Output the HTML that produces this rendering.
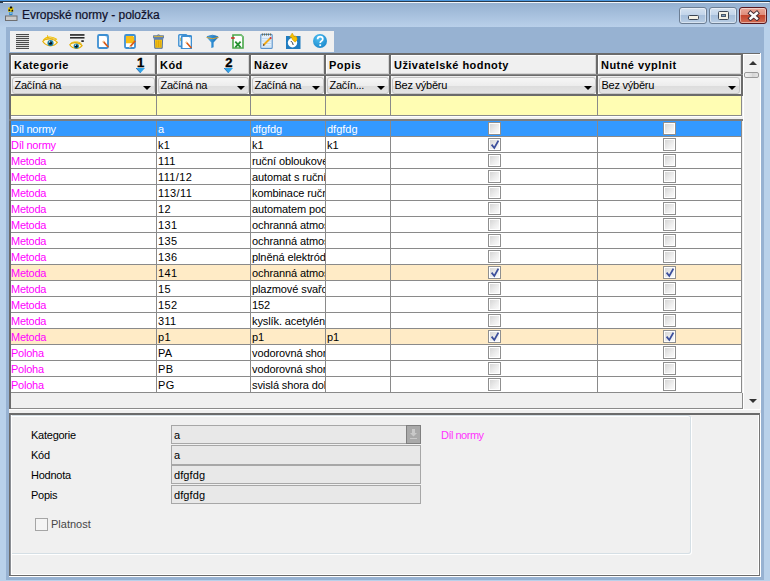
<!DOCTYPE html>
<html><head><meta charset="utf-8"><title>Evropské normy - položka</title>
<style>
*{margin:0;padding:0;box-sizing:border-box}
html,body{width:770px;height:581px;overflow:hidden;background:#b9d1ea;font-family:"Liberation Sans",sans-serif;font-size:11px;color:#000}
.a{position:absolute}
.t{position:absolute;white-space:nowrap;line-height:13px;letter-spacing:-0.25px}
.cb{position:absolute;width:13px;height:13px;border:1px solid #8f8f8f;background:#fff}
.cb i{position:absolute;left:1px;top:1px;width:9px;height:9px;background:linear-gradient(135deg,#d6d6d6 0%,#eeeeee 60%,#fafafa 100%)}
.cb svg{position:absolute;left:1px;top:0px}
.row{position:absolute;left:11px;width:731px;height:15px;background:#fff}
.cell{position:absolute;top:0;height:15px;overflow:hidden;white-space:nowrap;line-height:15px;padding-top:1px;letter-spacing:-0.25px}
.combo{position:absolute;height:17px;border:1px solid #c6c6c6;border-radius:3px;background:linear-gradient(#f6f6f6 0%,#ededed 50%,#dcdcdc 51%,#e4e4e4 100%)}
.combo span{position:absolute;left:1.5px;top:0px;line-height:14px;white-space:nowrap;letter-spacing:-0.25px}
.combo b{position:absolute;right:3px;top:8px;width:0;height:0;border-left:4px solid transparent;border-right:4px solid transparent;border-top:4px solid #000}
.hdr{position:absolute;top:55px;height:19px;background:#f0f0f0;border-top:1px solid #fff;border-left:1px solid #fff;border-right:1px solid #d4d4d4;border-bottom:1px solid #d4d4d4}
.hdr span{position:absolute;left:2px;top:3px;font-weight:bold;line-height:13px;white-space:nowrap;letter-spacing:0.45px}
.lbl{position:absolute;left:31px;line-height:13px;letter-spacing:-0.25px}
.fld{position:absolute;left:171px;width:250px;height:19px;border:1px solid #a7a7a7;background:#e8e8e8}
.fld span{position:absolute;left:2px;top:3px;line-height:13px;letter-spacing:0.1px}
</style></head><body>

<div class="a" style="left:0;top:0;width:770px;height:1px;background:#4a97df"></div>
<div class="a" style="left:0;top:1px;width:770px;height:1px;background:#2a3a4c"></div>
<div class="a" style="left:1px;top:2px;width:768px;height:1px;background:#f2f6fb"></div>
<div class="a" style="left:0;top:2px;width:3px;height:2px;background:#2a3a4c"></div>
<div class="a" style="left:0;top:3px;width:770px;height:24px;background:linear-gradient(#95b1d1,#b9d0ea)"></div>
<svg class="a" style="left:5px;top:6px" width="13" height="16" viewBox="0 0 13 16">
<rect x="0.5" y="10" width="11.5" height="4.5" fill="#cacaca" stroke="#6e6e70" stroke-width="1"/>
<path d="M3 10.5 L5 9 L7.5 9 L9.5 10.5 Z" fill="#9a9a9a"/>
<rect x="4.2" y="5.6" width="3.2" height="3.6" fill="#2a86c6"/>
<rect x="4.8" y="6.6" width="2" height="1" fill="#bfe0f5"/>
<path d="M3 1.5 L8.5 1.5 L8.2 5.8 L3.3 5.8 Z" fill="#f2d000"/>
<path d="M5 0.6 L7 0.6 L7.4 2.4 L4.6 2.4 Z M3.4 3.6 L5 3.2 L5.4 4.8 L3.6 5.2 Z M6.6 4 L8 3.6 L8.2 5.4 L6.4 5.6 Z" fill="#111"/>
</svg>
<div class="t" style="left:22px;top:8px;font-size:12px;line-height:15px;letter-spacing:-0.05px;color:#10102a;-webkit-text-stroke:0.2px #10102a">Evropské normy - položka</div>
<div class="a" style="left:679px;top:7px;width:28px;height:17px;border:1px solid #6c7e94;border-radius:3px;background:linear-gradient(#d5e2f0 0%,#c3d5ea 45%,#a7bfdb 50%,#b8cde4 100%);box-shadow:inset 0 0 0 1px rgba(255,255,255,0.45)"></div>
<div class="a" style="left:709px;top:7px;width:28px;height:17px;border:1px solid #6c7e94;border-radius:3px;background:linear-gradient(#d5e2f0 0%,#c3d5ea 45%,#a7bfdb 50%,#b8cde4 100%);box-shadow:inset 0 0 0 1px rgba(255,255,255,0.45)"></div>
<div class="a" style="left:739px;top:7px;width:28px;height:17px;border:1px solid #561820;border-radius:3px;background:linear-gradient(#eaa898 0%,#df8e7c 45%,#c4452c 50%,#d06a52 100%);box-shadow:inset 0 0 0 1px rgba(255,255,255,0.45)"></div>
<div class="a" style="left:688px;top:15px;width:11px;height:5px;background:#f4f1e6;border:1px solid #3c4654;border-radius:1.5px"></div>
<div class="a" style="left:718px;top:11px;width:11px;height:9px;background:#f4f1e6;border:1px solid #3c4654;border-radius:1.5px"><div class="a" style="left:2px;top:2px;width:5px;height:3px;background:#7f9bbb;border:1px solid #4a5868"></div></div>
<svg class="a" style="left:747px;top:10px" width="13" height="11" viewBox="0 0 13 11"><path d="M3.6 3.2 L9.8 8.4 M9.8 3.2 L3.6 8.4" stroke="#3a2630" stroke-width="4.4" stroke-linecap="square"/><path d="M3.6 3.2 L9.8 8.4 M9.8 3.2 L3.6 8.4" stroke="#fbfbfb" stroke-width="2.6" stroke-linecap="square"/></svg>
<div class="a" style="left:6px;top:27px;width:758px;height:553px;background:#97b2d2"></div>
<div class="a" style="left:10px;top:31px;width:324px;height:21px;background:#f0f0f0"></div>
<svg class="a" style="left:16px;top:34px" width="14" height="15" viewBox="0 0 14 15"><g fill="#4a4a4a" transform="scale(0.93,1)"><rect x="0" y="0" width="14" height="1.1"/><rect x="0" y="2" width="14" height="1.1"/><rect x="0" y="4" width="14" height="1.1"/><rect x="0" y="6" width="14" height="1.1"/><rect x="0" y="8" width="14" height="1.1"/><rect x="0" y="10" width="14" height="1.1"/><rect x="0" y="12" width="14" height="1.1"/><rect x="0" y="14" width="14" height="1.1"/></g></svg>
<svg class="a" style="left:42px;top:35px" width="16" height="13" viewBox="0 0 16 13"><path d="M1 5.5 C4 1.5 10 0.8 15 4.5" fill="none" stroke="#f2c000" stroke-width="1.1"/><path d="M2.5 6 C5 3 10 2.5 14 5" fill="none" stroke="#e8b400" stroke-width="0.9"/><path d="M5.5 0.2 L5.8 2.6" stroke="#e8b400" stroke-width="0.9"/><path d="M0.8 6.5 C3 3.5 11 2.5 15.3 7.5 C12 11.8 5 12.3 0.8 6.5 Z" fill="#fdf8e0" stroke="#e3ac00" stroke-width="1.2"/><circle cx="8.5" cy="8" r="3.1" fill="#1f84ad"/><circle cx="8.5" cy="8.2" r="1.6" fill="#05121c"/><circle cx="7.6" cy="6.9" r="0.7" fill="#fff"/></svg>
<svg class="a" style="left:69px;top:34px" width="16" height="15" viewBox="0 0 16 15"><rect x="1" y="0.2" width="14.5" height="1.5" fill="#151515"/><rect x="1" y="3.1" width="14.5" height="1.4" fill="#151515"/><rect x="12.3" y="6.3" width="2.5" height="1.6" fill="#151515"/><g transform="translate(0,5.2) scale(0.86)"><path d="M1.5 5.5 C4 2.5 10 2 14.5 5" fill="none" stroke="#f2c000" stroke-width="1"/><path d="M0.8 6.5 C3 3.5 11 2.5 15.3 7.5 C12 11.8 5 12.3 0.8 6.5 Z" fill="#fdf8e0" stroke="#e3ac00" stroke-width="1.2"/><circle cx="8.5" cy="8" r="3.1" fill="#1f84ad"/><circle cx="8.5" cy="8.2" r="1.6" fill="#05121c"/><circle cx="7.6" cy="6.9" r="0.7" fill="#fff"/></g></svg>
<svg class="a" style="left:97px;top:34px" width="13" height="15" viewBox="0 0 13 15"><rect x="1" y="1" width="10" height="13" rx="1.2" fill="#fff" stroke="#3d8fd2" stroke-width="1.8"/><path d="M8.2 1.9 L10.1 1.9 L10.1 3.9 Z" fill="#9cc8ee"/><path d="M6.2 7.4 L11.4 13.2" stroke="#d85a18" stroke-width="1.7"/><path d="M5.8 7 L6.9 8.2" stroke="#f4c890" stroke-width="1.5"/></svg>
<svg class="a" style="left:124px;top:34px" width="13" height="15" viewBox="0 0 13 15"><rect x="1" y="1" width="10" height="13" rx="1.2" fill="#fff" stroke="#3d8fd2" stroke-width="1.8"/><path d="M2 2 H9.2 L10.1 3.5 V9.3 H2 Z" fill="#f7bd14"/><path d="M11.3 6.8 L6.2 12.6" stroke="#d85a18" stroke-width="1.7"/><path d="M6.5 12.3 L5.4 13.5" stroke="#f4d090" stroke-width="1.4"/></svg>
<svg class="a" style="left:153px;top:34px" width="11" height="15" viewBox="0 0 11 15"><path d="M3.8 1.6 Q5.5 -0.2 7.2 1.6" fill="#f2c21c" stroke="#5673a0" stroke-width="0.8"/><rect x="0.6" y="1.8" width="9.8" height="1.8" fill="#f2c21c" stroke="#5673a0" stroke-width="0.9"/><rect x="0.6" y="3.6" width="9.8" height="1.6" fill="#6088c0"/><path d="M1.4 5.2 L9.6 5.2 L9.2 14.3 L1.8 14.3 Z" fill="#f2c21c" stroke="#5673a0" stroke-width="1"/><path d="M3.8 6.5 V13 M5.5 6.5 V13 M7.2 6.5 V13" stroke="#d9a000" stroke-width="0.8"/></svg>
<svg class="a" style="left:178px;top:34px" width="14" height="15" viewBox="0 0 14 15"><rect x="0.8" y="0.8" width="8" height="11.5" rx="0.8" fill="#fff" stroke="#3d8fd2" stroke-width="1.4"/><rect x="2.2" y="4" width="1" height="3" fill="#f2c21c"/><g transform="translate(2.6,1)"><rect x="1" y="1" width="10" height="13" rx="1.2" fill="#fff" stroke="#3d8fd2" stroke-width="1.8"/><path d="M8.2 1.9 L10.1 1.9 L10.1 3.9 Z" fill="#9cc8ee"/><path d="M5.6 7.2 L10.8 13" stroke="#d85a18" stroke-width="1.7"/><path d="M5.2 6.8 L6.3 8" stroke="#f4c890" stroke-width="1.5"/></g></svg>
<svg class="a" style="left:206px;top:34px" width="13" height="14" viewBox="0 0 13 14"><defs><linearGradient id="fg" x1="0" x2="1"><stop offset="0" stop-color="#60b4ea"/><stop offset="0.5" stop-color="#2b8ad0"/><stop offset="1" stop-color="#1a6cb0"/></linearGradient></defs><path d="M0.3 3 Q6.5 -0.6 12.7 3 L7.6 8.6 L7.6 13.2 L5.3 14 L5.3 8.6 Z" fill="url(#fg)"/><path d="M0.6 3.4 Q6.5 6 12.4 3.4" fill="none" stroke="#d9a030" stroke-width="1"/><path d="M1 2.6 Q6.5 -0.2 12 2.6" fill="none" stroke="#2a7cc0" stroke-width="0.8"/></svg>
<svg class="a" style="left:231px;top:34px" width="13" height="15" viewBox="0 0 13 15"><path d="M2 1 H10.2 L12 2.8 V14 H2 Z" fill="#fff" stroke="#4aa84a" stroke-width="1.6"/><path d="M10 1.5 L11.5 1.5 L11.5 3 Z" fill="#bfe3bf"/><rect x="0" y="3.3" width="3.8" height="1.4" fill="#d42020"/><path d="M4.3 7.6 L9.6 13.4 M9.6 7.6 L4.3 13.4" stroke="#259030" stroke-width="1.8"/></svg>
<svg class="a" style="left:260px;top:33px" width="13" height="16" viewBox="0 0 13 16"><rect x="0.8" y="1.4" width="11.4" height="14" rx="1" fill="#e4f0fb" stroke="#5a92cc" stroke-width="1.1"/><path d="M2 5.5 H11 M2 8 H11 M2 10.5 H11 M2 13 H11" stroke="#b8d4ee" stroke-width="0.7"/><path d="M2.5 0.5 V2.6 M4.5 0.5 V2.6 M6.5 0.5 V2.6 M8.5 0.5 V2.6 M10.5 0.5 V2.6" stroke="#6a6a4a" stroke-width="0.9"/><path d="M3.8 11.8 L10.2 5.4" stroke="#f0a818" stroke-width="2"/><path d="M10 5.6 L11.2 4.4" stroke="#d03030" stroke-width="2"/><path d="M3.2 12.4 L4.2 11.4" stroke="#503018" stroke-width="1.4"/></svg>
<svg class="a" style="left:286px;top:33px" width="15" height="16" viewBox="0 0 15 16"><rect x="0" y="3" width="14.5" height="13" fill="#1f7cc0"/><circle cx="6.5" cy="9.8" r="4.7" fill="#fff"/><path d="M6.5 9.8 L4.8 8 M6.5 9.8 L7.2 12" stroke="#203040" stroke-width="0.9"/><path d="M6.2 0 L3.6 4.2 L5.4 4.2 Q5.6 7 9.2 9.2 Q12.6 6.6 10.4 3.6 Q9.4 2.6 7.8 3.2 L8.8 4.2 Z" fill="#f7c000" stroke="#c08a00" stroke-width="0.4"/></svg>
<svg class="a" style="left:313px;top:34px" width="15" height="15" viewBox="0 0 15 15"><defs><radialGradient id="hg" cx="0.4" cy="0.3" r="0.85"><stop offset="0" stop-color="#4fc0f2"/><stop offset="1" stop-color="#1580c6"/></radialGradient></defs><circle cx="7" cy="7" r="7" fill="url(#hg)"/><path d="M4.6 5.2 Q4.6 2.6 7.2 2.6 Q9.8 2.6 9.8 5 Q9.8 6.4 8.2 7.2 Q7.2 7.7 7.2 9" fill="none" stroke="#fff" stroke-width="1.7"/><rect x="6.3" y="10.3" width="1.8" height="1.8" fill="#fff"/></svg>

<div class="a" style="left:9px;top:53px;width:752px;height:356px;background:#f0f0f0"></div>
<div class="a" style="left:9px;top:53px;width:734px;height:2px;background:#6b6b6b"></div>
<div class="a" style="left:743px;top:53px;width:17px;height:1px;background:#6b6b6b"></div>
<div class="a" style="left:9px;top:53px;width:2px;height:356px;background:#6b6b6b"></div>
<div class="hdr" style="left:11px;width:144px"><span>Kategorie</span></div>
<div class="hdr" style="left:157px;width:92px"><span>Kód</span></div>
<div class="hdr" style="left:251px;width:73px"><span>Název</span></div>
<div class="hdr" style="left:326px;width:63px"><span>Popis</span></div>
<div class="hdr" style="left:391px;width:205px"><span>Uživatelské hodnoty</span></div>
<div class="hdr" style="left:598px;width:143px"><span>Nutné vyplnit</span></div>
<div class="a" style="left:155px;top:53px;width:2px;height:43px;background:#6b6b6b"></div>
<div class="a" style="left:249px;top:53px;width:2px;height:43px;background:#6b6b6b"></div>
<div class="a" style="left:324px;top:53px;width:2px;height:43px;background:#6b6b6b"></div>
<div class="a" style="left:389px;top:53px;width:2px;height:43px;background:#6b6b6b"></div>
<div class="a" style="left:596px;top:53px;width:2px;height:43px;background:#6b6b6b"></div>
<div class="a" style="left:741px;top:53px;width:2px;height:43px;background:#6b6b6b"></div>
<div class="a" style="left:11px;top:74px;width:732px;height:1px;background:#8a8a8a"></div>
<div class="a" style="left:11px;top:75px;width:732px;height:1px;background:#6b6b6b"></div>
<div class="a" style="left:11px;top:94px;width:732px;height:2px;background:#6b6b6b"></div>
<div class="t" style="left:137px;top:56px;font-weight:bold;font-size:13px;line-height:13px;letter-spacing:0;-webkit-text-stroke:0.35px #000">1</div>
<svg class="a" style="left:136px;top:68px" width="9" height="5" viewBox="0 0 9 5"><path d="M0 0 H9 L4.5 5 Z" fill="#2fa4ea"/><path d="M0 0 L4.5 5" stroke="#2060a8" stroke-width="0.8"/></svg>
<div class="t" style="left:225.2px;top:56px;font-weight:bold;font-size:13px;line-height:13px;letter-spacing:0;-webkit-text-stroke:0.35px #000">2</div>
<svg class="a" style="left:224px;top:68px" width="9" height="5" viewBox="0 0 9 5"><path d="M0 0 H9 L4.5 5 Z" fill="#2fa4ea"/><path d="M0 0 L4.5 5" stroke="#2060a8" stroke-width="0.8"/></svg>
<div class="combo" style="left:12px;top:77px;width:143px"><span>Začíná na</span><b></b></div>
<div class="combo" style="left:158px;top:77px;width:91px"><span>Začíná na</span><b></b></div>
<div class="combo" style="left:252px;top:77px;width:72px"><span>Začíná na</span><b></b></div>
<div class="combo" style="left:327px;top:77px;width:62px"><span>Začín...</span><b></b></div>
<div class="combo" style="left:392px;top:77px;width:204px"><span>Bez výběru</span><b></b></div>
<div class="combo" style="left:599px;top:77px;width:141px"><span>Bez výběru</span><b></b></div>
<div class="a" style="left:154px;top:76px;width:1px;height:1px;background:#fff"></div>
<div class="a" style="left:157px;top:76px;width:1px;height:1px;background:#fff"></div>
<div class="a" style="left:154px;top:93px;width:1px;height:1px;background:#fff"></div>
<div class="a" style="left:157px;top:93px;width:1px;height:1px;background:#fff"></div>
<div class="a" style="left:248px;top:76px;width:1px;height:1px;background:#fff"></div>
<div class="a" style="left:251px;top:76px;width:1px;height:1px;background:#fff"></div>
<div class="a" style="left:248px;top:93px;width:1px;height:1px;background:#fff"></div>
<div class="a" style="left:251px;top:93px;width:1px;height:1px;background:#fff"></div>
<div class="a" style="left:323px;top:76px;width:1px;height:1px;background:#fff"></div>
<div class="a" style="left:326px;top:76px;width:1px;height:1px;background:#fff"></div>
<div class="a" style="left:323px;top:93px;width:1px;height:1px;background:#fff"></div>
<div class="a" style="left:326px;top:93px;width:1px;height:1px;background:#fff"></div>
<div class="a" style="left:388px;top:76px;width:1px;height:1px;background:#fff"></div>
<div class="a" style="left:391px;top:76px;width:1px;height:1px;background:#fff"></div>
<div class="a" style="left:388px;top:93px;width:1px;height:1px;background:#fff"></div>
<div class="a" style="left:391px;top:93px;width:1px;height:1px;background:#fff"></div>
<div class="a" style="left:595px;top:76px;width:1px;height:1px;background:#fff"></div>
<div class="a" style="left:598px;top:76px;width:1px;height:1px;background:#fff"></div>
<div class="a" style="left:595px;top:93px;width:1px;height:1px;background:#fff"></div>
<div class="a" style="left:598px;top:93px;width:1px;height:1px;background:#fff"></div>
<div class="a" style="left:11px;top:96px;width:731px;height:19px;background:#fffdb3"></div>
<div class="a" style="left:156px;top:96px;width:1px;height:19px;background:#8a8a8a"></div>
<div class="a" style="left:250px;top:96px;width:1px;height:19px;background:#8a8a8a"></div>
<div class="a" style="left:325px;top:96px;width:1px;height:19px;background:#8a8a8a"></div>
<div class="a" style="left:390px;top:96px;width:1px;height:19px;background:#8a8a8a"></div>
<div class="a" style="left:597px;top:96px;width:1px;height:19px;background:#8a8a8a"></div>
<div class="a" style="left:741px;top:96px;width:1px;height:19px;background:#8a8a8a"></div>
<div class="a" style="left:11px;top:115px;width:731px;height:1px;background:#8a8a8a"></div>
<div class="a" style="left:11px;top:116px;width:731px;height:1px;background:#ffffff"></div>
<div class="a" style="left:11px;top:117px;width:731px;height:2px;background:#f0f0f0"></div>
<div class="a" style="left:9px;top:119px;width:734px;height:2px;background:#7d7d7d"></div>
<div class="row" style="top:121px;background:#3399ff">
<div class="cell" style="left:0px;width:145px;padding-left:0px;letter-spacing:-0.25px;color:#fff">Díl normy</div>
<div class="cell" style="left:146px;width:93px;padding-left:1px;letter-spacing:0.35px;color:#fff">a</div>
<div class="cell" style="left:240px;width:74px;padding-left:1px;letter-spacing:-0.1px;color:#fff">dfgfdg</div>
<div class="cell" style="left:315px;width:64px;padding-left:1px;letter-spacing:0;color:#fff">dfgfdg</div>
</div>
<div class="cb" style="left:488px;top:122px"><i></i></div>
<div class="cb" style="left:663px;top:122px"><i></i></div>
<div class="a" style="left:11px;top:136px;width:731px;height:1px;background:#8a8a8a"></div>
<div class="row" style="top:137px;background:#fff">
<div class="cell" style="left:0px;width:145px;padding-left:0px;letter-spacing:-0.25px;color:#ff00ff">Díl normy</div>
<div class="cell" style="left:146px;width:93px;padding-left:1px;letter-spacing:0.35px;color:#000">k1</div>
<div class="cell" style="left:240px;width:74px;padding-left:1px;letter-spacing:-0.1px;color:#000">k1</div>
<div class="cell" style="left:315px;width:64px;padding-left:1px;letter-spacing:0;color:#000">k1</div>
</div>
<div class="cb" style="left:488px;top:138px"><i></i><svg width="11" height="11" viewBox="0 0 11 11"><path d="M1.6 5.6 L4.3 9 L8.4 1.6" fill="none" stroke="#3c4f9c" stroke-width="1.8"/></svg></div>
<div class="cb" style="left:663px;top:138px"><i></i></div>
<div class="a" style="left:11px;top:152px;width:731px;height:1px;background:#8a8a8a"></div>
<div class="row" style="top:153px;background:#fff">
<div class="cell" style="left:0px;width:145px;padding-left:0px;letter-spacing:-0.25px;color:#ff00ff">Metoda</div>
<div class="cell" style="left:146px;width:93px;padding-left:1px;letter-spacing:0.35px;color:#000">111</div>
<div class="cell" style="left:240px;width:74px;padding-left:1px;letter-spacing:-0.1px;color:#000">ruční obloukové svařování</div>
</div>
<div class="cb" style="left:488px;top:154px"><i></i></div>
<div class="cb" style="left:663px;top:154px"><i></i></div>
<div class="a" style="left:11px;top:168px;width:731px;height:1px;background:#8a8a8a"></div>
<div class="row" style="top:169px;background:#fff">
<div class="cell" style="left:0px;width:145px;padding-left:0px;letter-spacing:-0.25px;color:#ff00ff">Metoda</div>
<div class="cell" style="left:146px;width:93px;padding-left:1px;letter-spacing:0.35px;color:#000">111/12</div>
<div class="cell" style="left:240px;width:74px;padding-left:1px;letter-spacing:-0.1px;color:#000">automat s ručním</div>
</div>
<div class="cb" style="left:488px;top:170px"><i></i></div>
<div class="cb" style="left:663px;top:170px"><i></i></div>
<div class="a" style="left:11px;top:184px;width:731px;height:1px;background:#8a8a8a"></div>
<div class="row" style="top:185px;background:#fff">
<div class="cell" style="left:0px;width:145px;padding-left:0px;letter-spacing:-0.25px;color:#ff00ff">Metoda</div>
<div class="cell" style="left:146px;width:93px;padding-left:1px;letter-spacing:0.35px;color:#000">113/11</div>
<div class="cell" style="left:240px;width:74px;padding-left:1px;letter-spacing:-0.1px;color:#000">kombinace ručního</div>
</div>
<div class="cb" style="left:488px;top:186px"><i></i></div>
<div class="cb" style="left:663px;top:186px"><i></i></div>
<div class="a" style="left:11px;top:200px;width:731px;height:1px;background:#8a8a8a"></div>
<div class="row" style="top:201px;background:#fff">
<div class="cell" style="left:0px;width:145px;padding-left:0px;letter-spacing:-0.25px;color:#ff00ff">Metoda</div>
<div class="cell" style="left:146px;width:93px;padding-left:1px;letter-spacing:0.35px;color:#000">12</div>
<div class="cell" style="left:240px;width:74px;padding-left:1px;letter-spacing:-0.1px;color:#000">automatem pod tavidlem</div>
</div>
<div class="cb" style="left:488px;top:202px"><i></i></div>
<div class="cb" style="left:663px;top:202px"><i></i></div>
<div class="a" style="left:11px;top:216px;width:731px;height:1px;background:#8a8a8a"></div>
<div class="row" style="top:217px;background:#fff">
<div class="cell" style="left:0px;width:145px;padding-left:0px;letter-spacing:-0.25px;color:#ff00ff">Metoda</div>
<div class="cell" style="left:146px;width:93px;padding-left:1px;letter-spacing:0.35px;color:#000">131</div>
<div class="cell" style="left:240px;width:74px;padding-left:1px;letter-spacing:-0.1px;color:#000">ochranná atmosféra</div>
</div>
<div class="cb" style="left:488px;top:218px"><i></i></div>
<div class="cb" style="left:663px;top:218px"><i></i></div>
<div class="a" style="left:11px;top:232px;width:731px;height:1px;background:#8a8a8a"></div>
<div class="row" style="top:233px;background:#fff">
<div class="cell" style="left:0px;width:145px;padding-left:0px;letter-spacing:-0.25px;color:#ff00ff">Metoda</div>
<div class="cell" style="left:146px;width:93px;padding-left:1px;letter-spacing:0.35px;color:#000">135</div>
<div class="cell" style="left:240px;width:74px;padding-left:1px;letter-spacing:-0.1px;color:#000">ochranná atmosféra</div>
</div>
<div class="cb" style="left:488px;top:234px"><i></i></div>
<div class="cb" style="left:663px;top:234px"><i></i></div>
<div class="a" style="left:11px;top:248px;width:731px;height:1px;background:#8a8a8a"></div>
<div class="row" style="top:249px;background:#fff">
<div class="cell" style="left:0px;width:145px;padding-left:0px;letter-spacing:-0.25px;color:#ff00ff">Metoda</div>
<div class="cell" style="left:146px;width:93px;padding-left:1px;letter-spacing:0.35px;color:#000">136</div>
<div class="cell" style="left:240px;width:74px;padding-left:1px;letter-spacing:-0.1px;color:#000">plněná elektróda</div>
</div>
<div class="cb" style="left:488px;top:250px"><i></i></div>
<div class="cb" style="left:663px;top:250px"><i></i></div>
<div class="a" style="left:11px;top:264px;width:731px;height:1px;background:#8a8a8a"></div>
<div class="row" style="top:265px;background:#ffebc6">
<div class="cell" style="left:0px;width:145px;padding-left:0px;letter-spacing:-0.25px;color:#ff00ff">Metoda</div>
<div class="cell" style="left:146px;width:93px;padding-left:1px;letter-spacing:0.35px;color:#000">141</div>
<div class="cell" style="left:240px;width:74px;padding-left:1px;letter-spacing:-0.1px;color:#000">ochranná atmosféra</div>
</div>
<div class="cb" style="left:488px;top:266px"><i></i><svg width="11" height="11" viewBox="0 0 11 11"><path d="M1.6 5.6 L4.3 9 L8.4 1.6" fill="none" stroke="#3c4f9c" stroke-width="1.8"/></svg></div>
<div class="cb" style="left:663px;top:266px"><i></i><svg width="11" height="11" viewBox="0 0 11 11"><path d="M1.6 5.6 L4.3 9 L8.4 1.6" fill="none" stroke="#3c4f9c" stroke-width="1.8"/></svg></div>
<div class="a" style="left:11px;top:280px;width:731px;height:1px;background:#8a8a8a"></div>
<div class="row" style="top:281px;background:#fff">
<div class="cell" style="left:0px;width:145px;padding-left:0px;letter-spacing:-0.25px;color:#ff00ff">Metoda</div>
<div class="cell" style="left:146px;width:93px;padding-left:1px;letter-spacing:0.35px;color:#000">15</div>
<div class="cell" style="left:240px;width:74px;padding-left:1px;letter-spacing:-0.1px;color:#000">plazmové svařování</div>
</div>
<div class="cb" style="left:488px;top:282px"><i></i></div>
<div class="cb" style="left:663px;top:282px"><i></i></div>
<div class="a" style="left:11px;top:296px;width:731px;height:1px;background:#8a8a8a"></div>
<div class="row" style="top:297px;background:#fff">
<div class="cell" style="left:0px;width:145px;padding-left:0px;letter-spacing:-0.25px;color:#ff00ff">Metoda</div>
<div class="cell" style="left:146px;width:93px;padding-left:1px;letter-spacing:0.35px;color:#000">152</div>
<div class="cell" style="left:240px;width:74px;padding-left:1px;letter-spacing:-0.1px;color:#000">152</div>
</div>
<div class="cb" style="left:488px;top:298px"><i></i></div>
<div class="cb" style="left:663px;top:298px"><i></i></div>
<div class="a" style="left:11px;top:312px;width:731px;height:1px;background:#8a8a8a"></div>
<div class="row" style="top:313px;background:#fff">
<div class="cell" style="left:0px;width:145px;padding-left:0px;letter-spacing:-0.25px;color:#ff00ff">Metoda</div>
<div class="cell" style="left:146px;width:93px;padding-left:1px;letter-spacing:0.35px;color:#000">311</div>
<div class="cell" style="left:240px;width:74px;padding-left:1px;letter-spacing:-0.1px;color:#000">kyslík. acetylén</div>
</div>
<div class="cb" style="left:488px;top:314px"><i></i></div>
<div class="cb" style="left:663px;top:314px"><i></i></div>
<div class="a" style="left:11px;top:328px;width:731px;height:1px;background:#8a8a8a"></div>
<div class="row" style="top:329px;background:#ffebc6">
<div class="cell" style="left:0px;width:145px;padding-left:0px;letter-spacing:-0.25px;color:#ff00ff">Metoda</div>
<div class="cell" style="left:146px;width:93px;padding-left:1px;letter-spacing:0.35px;color:#000">p1</div>
<div class="cell" style="left:240px;width:74px;padding-left:1px;letter-spacing:-0.1px;color:#000">p1</div>
<div class="cell" style="left:315px;width:64px;padding-left:1px;letter-spacing:0;color:#000">p1</div>
</div>
<div class="cb" style="left:488px;top:330px"><i></i><svg width="11" height="11" viewBox="0 0 11 11"><path d="M1.6 5.6 L4.3 9 L8.4 1.6" fill="none" stroke="#3c4f9c" stroke-width="1.8"/></svg></div>
<div class="cb" style="left:663px;top:330px"><i></i><svg width="11" height="11" viewBox="0 0 11 11"><path d="M1.6 5.6 L4.3 9 L8.4 1.6" fill="none" stroke="#3c4f9c" stroke-width="1.8"/></svg></div>
<div class="a" style="left:11px;top:344px;width:731px;height:1px;background:#8a8a8a"></div>
<div class="row" style="top:345px;background:#fff">
<div class="cell" style="left:0px;width:145px;padding-left:0px;letter-spacing:-0.25px;color:#ff00ff">Poloha</div>
<div class="cell" style="left:146px;width:93px;padding-left:1px;letter-spacing:0.35px;color:#000">PA</div>
<div class="cell" style="left:240px;width:74px;padding-left:1px;letter-spacing:-0.1px;color:#000">vodorovná shora</div>
</div>
<div class="cb" style="left:488px;top:346px"><i></i></div>
<div class="cb" style="left:663px;top:346px"><i></i></div>
<div class="a" style="left:11px;top:360px;width:731px;height:1px;background:#8a8a8a"></div>
<div class="row" style="top:361px;background:#fff">
<div class="cell" style="left:0px;width:145px;padding-left:0px;letter-spacing:-0.25px;color:#ff00ff">Poloha</div>
<div class="cell" style="left:146px;width:93px;padding-left:1px;letter-spacing:0.35px;color:#000">PB</div>
<div class="cell" style="left:240px;width:74px;padding-left:1px;letter-spacing:-0.1px;color:#000">vodorovná shora</div>
</div>
<div class="cb" style="left:488px;top:362px"><i></i></div>
<div class="cb" style="left:663px;top:362px"><i></i></div>
<div class="a" style="left:11px;top:376px;width:731px;height:1px;background:#8a8a8a"></div>
<div class="row" style="top:377px;background:#fff">
<div class="cell" style="left:0px;width:145px;padding-left:0px;letter-spacing:-0.25px;color:#ff00ff">Poloha</div>
<div class="cell" style="left:146px;width:93px;padding-left:1px;letter-spacing:0.35px;color:#000">PG</div>
<div class="cell" style="left:240px;width:74px;padding-left:1px;letter-spacing:-0.1px;color:#000">svislá shora dolů</div>
</div>
<div class="cb" style="left:488px;top:378px"><i></i></div>
<div class="cb" style="left:663px;top:378px"><i></i></div>
<div class="a" style="left:11px;top:392px;width:731px;height:1px;background:#8a8a8a"></div>
<div class="a" style="left:156px;top:121px;width:1px;height:272px;background:#8a8a8a"></div>
<div class="a" style="left:250px;top:121px;width:1px;height:272px;background:#8a8a8a"></div>
<div class="a" style="left:325px;top:121px;width:1px;height:272px;background:#8a8a8a"></div>
<div class="a" style="left:390px;top:121px;width:1px;height:272px;background:#8a8a8a"></div>
<div class="a" style="left:597px;top:121px;width:1px;height:272px;background:#8a8a8a"></div>
<div class="a" style="left:741px;top:121px;width:1px;height:272px;background:#8a8a8a"></div>
<div class="a" style="left:11px;top:408px;width:732px;height:1px;background:#8a8a8a"></div>
<div class="a" style="left:742px;top:393px;width:1px;height:16px;background:#8a8a8a"></div>
<div class="a" style="left:743px;top:54px;width:17px;height:355px;background:#f0f0f0;border-left:1px solid #fff;border-top:1px solid #fff"></div>
<div class="a" style="left:760px;top:53px;width:1px;height:356px;background:#fff"></div>
<div class="a" style="left:748.5px;top:61px;width:0;height:0;border-left:4px solid transparent;border-right:4px solid transparent;border-bottom:4px solid #333"></div>
<div class="a" style="left:744px;top:72px;width:15px;height:6px;border:1px solid #9a9a9a;border-radius:2px;background:linear-gradient(90deg,#f2f2f2,#e0e0e0 50%,#d2d2d2 51%,#e4e4e4)"></div>
<div class="a" style="left:748.5px;top:399px;width:0;height:0;border-left:4px solid transparent;border-right:4px solid transparent;border-top:4px solid #333"></div>
<div class="a" style="left:9px;top:409px;width:752px;height:4px;background:#f0f0f0;border-top:1px solid #fff"></div>
<div class="a" style="left:9px;top:413px;width:752px;height:164px;background:#fff"></div>
<div class="a" style="left:9px;top:413px;width:751px;height:163px;background:#f0f0f0;border-top:2px solid #6b6b6b;border-left:1px solid #6b6b6b;border-right:1px solid #767676;border-bottom:1px solid #6b6b6b;box-shadow:inset -1px -1px 0 #fff"></div>
<div class="a" style="left:11px;top:415px;width:680px;height:139px;border:1px solid #d5dfe5;border-left:none;border-radius:0 3px 3px 0;box-shadow:1px 1px 0 #fff, inset 0 1px 0 #fff"></div>
<div class="a" style="left:10px;top:415px;width:1px;height:160px;background:#8a8e94"></div>
<div class="a" style="left:11px;top:415px;width:1px;height:159px;background:#fff"></div>
<div class="lbl" style="top:429px">Kategorie</div>
<div class="fld" style="top:425px;height:19px"><span>a</span></div>
<div class="lbl" style="top:449px">Kód</div>
<div class="fld" style="top:445px;height:20px"><span>a</span></div>
<div class="lbl" style="top:469px">Hodnota</div>
<div class="fld" style="top:465px;height:19px"><span>dfgfdg</span></div>
<div class="lbl" style="top:489px">Popis</div>
<div class="fld" style="top:485px;height:19px"><span>dfgfdg</span></div>
<div class="a" style="left:406px;top:425px;width:15px;height:19px;background:#a9a9a9;border:1px solid #7f7f7f"></div>
<svg class="a" style="left:408px;top:428px" width="11" height="13" viewBox="0 0 11 13"><path d="M4 1 H7 V5 H9 L5.5 8.5 L2 5 H4 Z" fill="#c9c9c9"/><rect x="2" y="10" width="7" height="1" fill="#c9c9c9"/></svg>
<div class="t" style="left:441px;top:429px;color:#ff33ff;letter-spacing:-0.5px">Díl normy</div>
<div class="a" style="left:35px;top:518px;width:13px;height:13px;border:1px solid #a5a5a5;background:#f4f4f4"></div>
<div class="t" style="left:51px;top:518px;color:#474747;letter-spacing:0">Platnost</div>
</body></html>
